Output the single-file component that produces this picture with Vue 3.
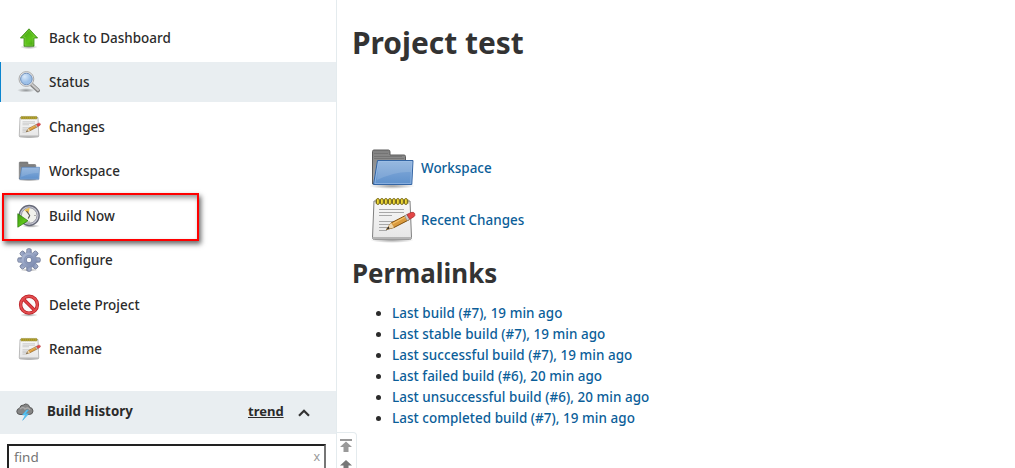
<script setup>
const tasks = [
  { label: 'Back to Dashboard', icon: 'up' },
  { label: 'Status', icon: 'search', active: true },
  { label: 'Changes', icon: 'notepad' },
  { label: 'Workspace', icon: 'folder' },
  { label: 'Build Now', icon: 'clock', marked: true },
  { label: 'Configure', icon: 'gear' },
  { label: 'Delete Project', icon: 'stop' },
  { label: 'Rename', icon: 'notepad' },
]
const permalinks = [
  'Last build (#7), 19 min ago',
  'Last stable build (#7), 19 min ago',
  'Last successful build (#7), 19 min ago',
  'Last failed build (#6), 20 min ago',
  'Last unsuccessful build (#6), 20 min ago',
  'Last completed build (#7), 19 min ago',
]
const rings = [0, 1, 2, 3, 4, 5, 6, 7]
const teeth = [0, 45, 90, 135, 180, 225, 270, 315]
</script>

<template>
  <div class="page">
    <svg class="defs" width="0" height="0" aria-hidden="true">
      <defs>
        <linearGradient id="gGreen" x1="0" y1="0" x2="1" y2="1">
          <stop offset="0" stop-color="#3f9d10" /><stop offset=".6" stop-color="#5fc51c" /><stop offset="1" stop-color="#39900c" />
        </linearGradient>
        <linearGradient id="gBlue" x1="0" y1="0" x2="0" y2="1">
          <stop offset="0" stop-color="#89aedb" /><stop offset="1" stop-color="#5f91cc" />
        </linearGradient>
        <linearGradient id="gGray" x1="0" y1="0" x2="0" y2="1">
          <stop offset="0" stop-color="#808080" /><stop offset="1" stop-color="#aaa" />
        </linearGradient>
        <linearGradient id="gPaper" x1="0" y1="0" x2="0" y2="1">
          <stop offset="0" stop-color="#f8f8f8" /><stop offset="1" stop-color="#e6e6e6" />
        </linearGradient>
        <linearGradient id="gGear" x1="0" y1="0" x2="1" y2="1">
          <stop offset="0" stop-color="#b4bfd8" /><stop offset="1" stop-color="#7483a9" />
        </linearGradient>
        <radialGradient id="gShade">
          <stop offset="0" stop-color="#000" stop-opacity=".38" /><stop offset="1" stop-color="#000" stop-opacity="0" />
        </radialGradient>
        <radialGradient id="gLens" cx=".35" cy=".3">
          <stop offset="0" stop-color="#d9e9fa" /><stop offset="1" stop-color="#9cc0e8" />
        </radialGradient>

        <symbol id="up" viewBox="0 0 24 24">
          <ellipse cx="12" cy="21" rx="9" ry="2.2" fill="url(#gShade)" />
          <path d="M12 2.800 20.600 12H17V20.200H7V12H3.400Z" fill="url(#gGreen)" stroke="#3b8a14" stroke-width=".8" />
          <path d="M12 4.300 18.300 11.100H16V19.200H8V11.100H5.700Z" fill="none" stroke="#9be05b" stroke-width=".6" opacity=".7" />
        </symbol>
        <symbol id="search" viewBox="0 0 24 24">
          <ellipse cx="9" cy="20.300" rx="9" ry="2.200" fill="url(#gShade)" />
          <path d="m14.500 14.500 6.500 6" stroke="#858585" stroke-width="4" stroke-linecap="round" />
          <path d="m15 14.400 6 5.600" stroke="#c9c9c9" stroke-width="2" stroke-linecap="round" />
          <circle cx="9.400" cy="9" r="7.400" fill="#eee" stroke="#aaa" stroke-width="1" />
          <circle cx="9.400" cy="9" r="5.800" fill="url(#gLens)" stroke="#6f8fba" stroke-width="1" />
        </symbol>
        <symbol id="folder" viewBox="0 0 48 48">
          <ellipse cx="24" cy="42" rx="23" ry="3" fill="url(#gShade)" />
          <path d="M4.500 40V7.500q0-1.500 1.500-1.500h14.500q1.500 0 1.500 2v3h14q1.500 0 1.500 1.500V40z" fill="url(#gGray)" stroke="#5c5c5c" />
          <path d="M6 9.500h14M6 12.500h28M6 14.500h30" stroke="#707070" stroke-width=".8" />
          <path d="M9.500 16.500H45L43.800 40.500H5.500Z" fill="url(#gBlue)" stroke="#3465a4" />
          <path d="M10.500 17.500H43.900L42.800 39.500H6.800Z" fill="none" stroke="#b3cff0" stroke-width=".8" opacity=".6" />
          <path d="M10.800 18H43.500l-.5 10q-15-1-34 8z" fill="#fff" opacity=".13" />
        </symbol>
        <symbol id="notepad" viewBox="0 0 48 48">
          <ellipse cx="24" cy="44" rx="22" ry="3" fill="url(#gShade)" />
          <path d="M6 5H42L43.500 41.500Q43.500 43.500 41.500 43.500H6.500Q4.500 43.500 4.500 41.500Z" fill="url(#gPaper)" stroke="#808080" />
          <path d="M5 41h38l.5 1q-.5 1.500-2 1.500H6.500q-2 0-2-1.500z" fill="#b5b5b5" />
          <path d="M11 13.500H36M11 16.500H36M11 19.500H24M11 25.500H34M11 28.500H27M11 31.500H24M11 34.500H19" stroke="#a8a8a8" stroke-width="1" />
          <rect x="7.500" y="3.500" width="33" height="4" fill="#8d8742" />
          <rect v-for="n in rings" :key="n" :x="8.500 + n * 4" y="2.500" width="2.800" height="6" rx="1.400" fill="#efd934" stroke="#6e6119" stroke-width=".9" />
          <path d="m18.500 33.500 4.500-6.500 15.500-8 2.700 4.700L26 31.500z" fill="#da9b3e" stroke="#81500d" />
          <path d="m23 26.500 3 5-7.500 2z" fill="#edd5aa" /><path d="m18.500 33.500 2-2.900 1.100 2z" fill="#222" />
          <path d="m25 27.500 14-7.500" stroke="#f5c26b" stroke-width="1.200" />
          <path d="m36.500 19.800 2.700 4.800 2.500-1.400-2.700-4.700z" fill="#ccc" stroke="#888" stroke-width=".6" />
          <path d="m39 18.500 4-2q2.700-.8 3.700 1 .8 2.200-1 3.400l-4 2.300z" fill="#e34646" stroke="#a93434" stroke-width=".8" />
        </symbol>
        <symbol id="clock" viewBox="0 0 24 24">
          <ellipse cx="14" cy="22" rx="9" ry="1.800" fill="url(#gShade)" />
          <circle cx="12.200" cy="11.500" r="10" fill="#c9cad5" stroke="#686b7a" stroke-width="1.300" />
          <circle cx="12.200" cy="11.500" r="7.800" fill="#f1f1ec" stroke="#8d8f9c" stroke-width=".9" />
          <path d="m11.500 10 1.200-6.500-5.500 2.500z" fill="#e9be52" />
          <path d="m9.500 7 3.200 4.500-1.500 3" fill="none" stroke="#555" stroke-width="1.100" />
          <path d="M18.500 11.500h-1M12 18.500v-1" stroke="#666" />
          <path d="M.8 9.700 11 16.800.8 23.200Z" fill="url(#gGreen)" stroke="#287a08" stroke-width=".7" />
        </symbol>
        <symbol id="gear" viewBox="0 0 24 24">
          <ellipse cx="12" cy="22" rx="9" ry="1.600" fill="url(#gShade)" />
          <g fill="url(#gGear)" stroke="#6d7794" stroke-width=".8">
            <path v-for="a in teeth" :key="a" d="M9.600 6 9.900 1.200q2.100-1.200 4.200 0L14.400 6z" :transform="`rotate(${a} 12 12)`" />
          </g>
          <circle cx="12" cy="12" r="7.600" fill="url(#gGear)" />
          <circle cx="12" cy="12" r="4.400" fill="none" stroke="#8795b8" stroke-width="1.200" />
          <circle cx="12" cy="12" r="2.800" fill="#fff" stroke="#69779b" stroke-width=".9" />
        </symbol>
        <symbol id="stop" viewBox="0 0 24 24">
          <ellipse cx="12" cy="22" rx="9" ry="1.800" fill="url(#gShade)" />
          <circle cx="12" cy="11.700" r="8.400" fill="#fafafa" stroke="#b91d23" stroke-width="3.400" />
          <path d="m6.300 6 11.400 11.400" stroke="#b91d23" stroke-width="3.400" />
          <circle cx="12" cy="11.700" r="8.400" fill="none" stroke="#e34e50" stroke-width="2" />
          <path d="m6.300 6 11.400 11.400" stroke="#df4145" stroke-width="2" />
        </symbol>
      </defs>
    </svg>

    <aside class="side">
      <nav class="tasks">
        <a v-for="t in tasks" :key="t.label" class="task" :class="{ active: t.active, marked: t.marked }">
          <svg class="ico"><use :href="'#' + t.icon" /></svg>
          <span>{{ t.label }}</span>
        </a>
      </nav>
      <header class="history">
        <svg class="storm" viewBox="0 0 18 18">
          <path d="M4 11.500Q.8 11.300.8 8.400.9 5.700 3.700 5.200 4.200 1.900 7.500 2q1.700-1.700 4-.6 2 .8 2 3 3.300.1 3.500 3.600-.1 3.300-3.500 3.500z" fill="#858585" stroke="#5a5a5a" />
          <path d="M4 6q3-3 5 0 3-2.500 5 1" fill="none" stroke="#a9a9a9" stroke-width="1.500" />
          <path d="m10.500 7-4 5h3l-2.800 5.300 6-6.500H9.600L12.400 7z" fill="#53c7f7" stroke="#49aee0" stroke-width=".6" />
        </svg>
        <strong>Build History</strong>
        <a class="trend">trend</a>
        <svg class="chev" viewBox="0 0 12 8"><path d="m1 6.800 5-5 5 5" fill="none" stroke="#333" stroke-width="2.200" /></svg>
      </header>
      <div class="find"><span>find</span><span class="clear">x</span></div>
    </aside>

    <main class="main">
      <h1>Project test</h1>
      <div class="links">
        <a class="big"><svg><use href="#folder" /></svg><span>Workspace</span></a>
        <a class="big"><svg><use href="#notepad" /></svg><span>Recent Changes</span></a>
      </div>
      <h2>Permalinks</h2>
      <ul>
        <li v-for="p in permalinks" :key="p"><a>{{ p }}</a></li>
      </ul>
      <div class="pager">
        <svg viewBox="0 0 12 13"><path d="M0 0h12v2H0zM6 2.500 12 8H8.500v5h-5V8H0z" fill="#999" /></svg>
        <svg viewBox="0 0 12 13"><path d="m6 0 6 5.500H8.500V13h-5V5.500H0z" fill="#777" /></svg>
      </div>
    </main>
  </div>
</template>

<style>
body { overflow: hidden; background: #fff; }
</style>
<style scoped>
.page { display: flex; width: 1015px; height: 468px; overflow: hidden; font: 460 13.450px/20px "Noto Sans", "Open Sans", sans-serif; color: #2b2b2b; background: #fff; }
.defs { position: absolute; }
.side { box-sizing: border-box; width: 337px; flex: none; border-right: 1px solid #e4ebee; }
.tasks { box-sizing: border-box; display: flex; flex-direction: column; gap: 4.500px; height: 391px; padding-top: 17.600px; }
.task { position: relative; box-sizing: border-box; display: flex; align-items: center; flex: none; height: 40px; padding-left: 17px; letter-spacing: .03px; }
.task.active { background: #e9eef1; box-shadow: inset 1px 0 #0b85cf; }
.ico { width: 24px; height: 24px; margin-right: 8px; }
.task.marked::after { content: ""; position: absolute; box-sizing: border-box; left: 2px; top: -2.600px; width: 197px; height: 48px; border: 2px solid #f00; box-shadow: 2px 3px 5px rgba(0, 0, 0, .6), inset 2px 3px 5px rgba(0, 0, 0, .4); }
.history { display: flex; align-items: center; box-sizing: border-box; height: 43px; padding: 0 0 3px 16px; background: #e9eef1; }
.storm { width: 18px; height: 18px; margin: 2px 13px 0 0; }
.history strong { width: 201px; font-size: 13.300px; }
.trend { font-size: 13px; font-weight: 700; width: 36px; text-decoration: underline; }
.chev { width: 12px; height: 8px; margin: 3px 0 0 14px; }
.find { display: flex; justify-content: space-between; box-sizing: border-box; width: 319px; height: 28px; margin: 10px 0 0 7px; padding: 1px 5px; border: 2px solid #767676; border-top-color: #222; border-left-color: #222; color: #757575; font-weight: 400; }
.clear { color: #999; font-size: 12.500px; line-height: 19px; margin-right: -1px; }
.main { position: relative; flex: 1; padding-left: 15px; }
h1 { margin: 23px 0 0; font-size: 29.900px; line-height: 40px; font-weight: 700; color: #333; }
.links { display: flex; flex-direction: column; margin: 79px 0 0 16px; }
.big { display: flex; align-items: center; height: 52px; }
.big svg { width: 48px; height: 48px; margin-right: 5px; }
.big span, li a { color: #0b5e99; }
h2 { margin: 6px 0 0; font-size: 25.900px; line-height: 42px; font-weight: 700; color: #333; }
ul { margin: 9px 0 0; padding-left: 40px; line-height: 21px; letter-spacing: .05px; }
.pager { position: absolute; left: 0; top: 432px; box-sizing: border-box; width: 20px; height: 50px; padding: 6px 0 0 3px; border: 1px solid #e4ebee; border-left: 0; border-radius: 0 4px 0 0; display: flex; flex-direction: column; gap: 8px; }
.pager svg { width: 12px; height: 13px; }
</style>
